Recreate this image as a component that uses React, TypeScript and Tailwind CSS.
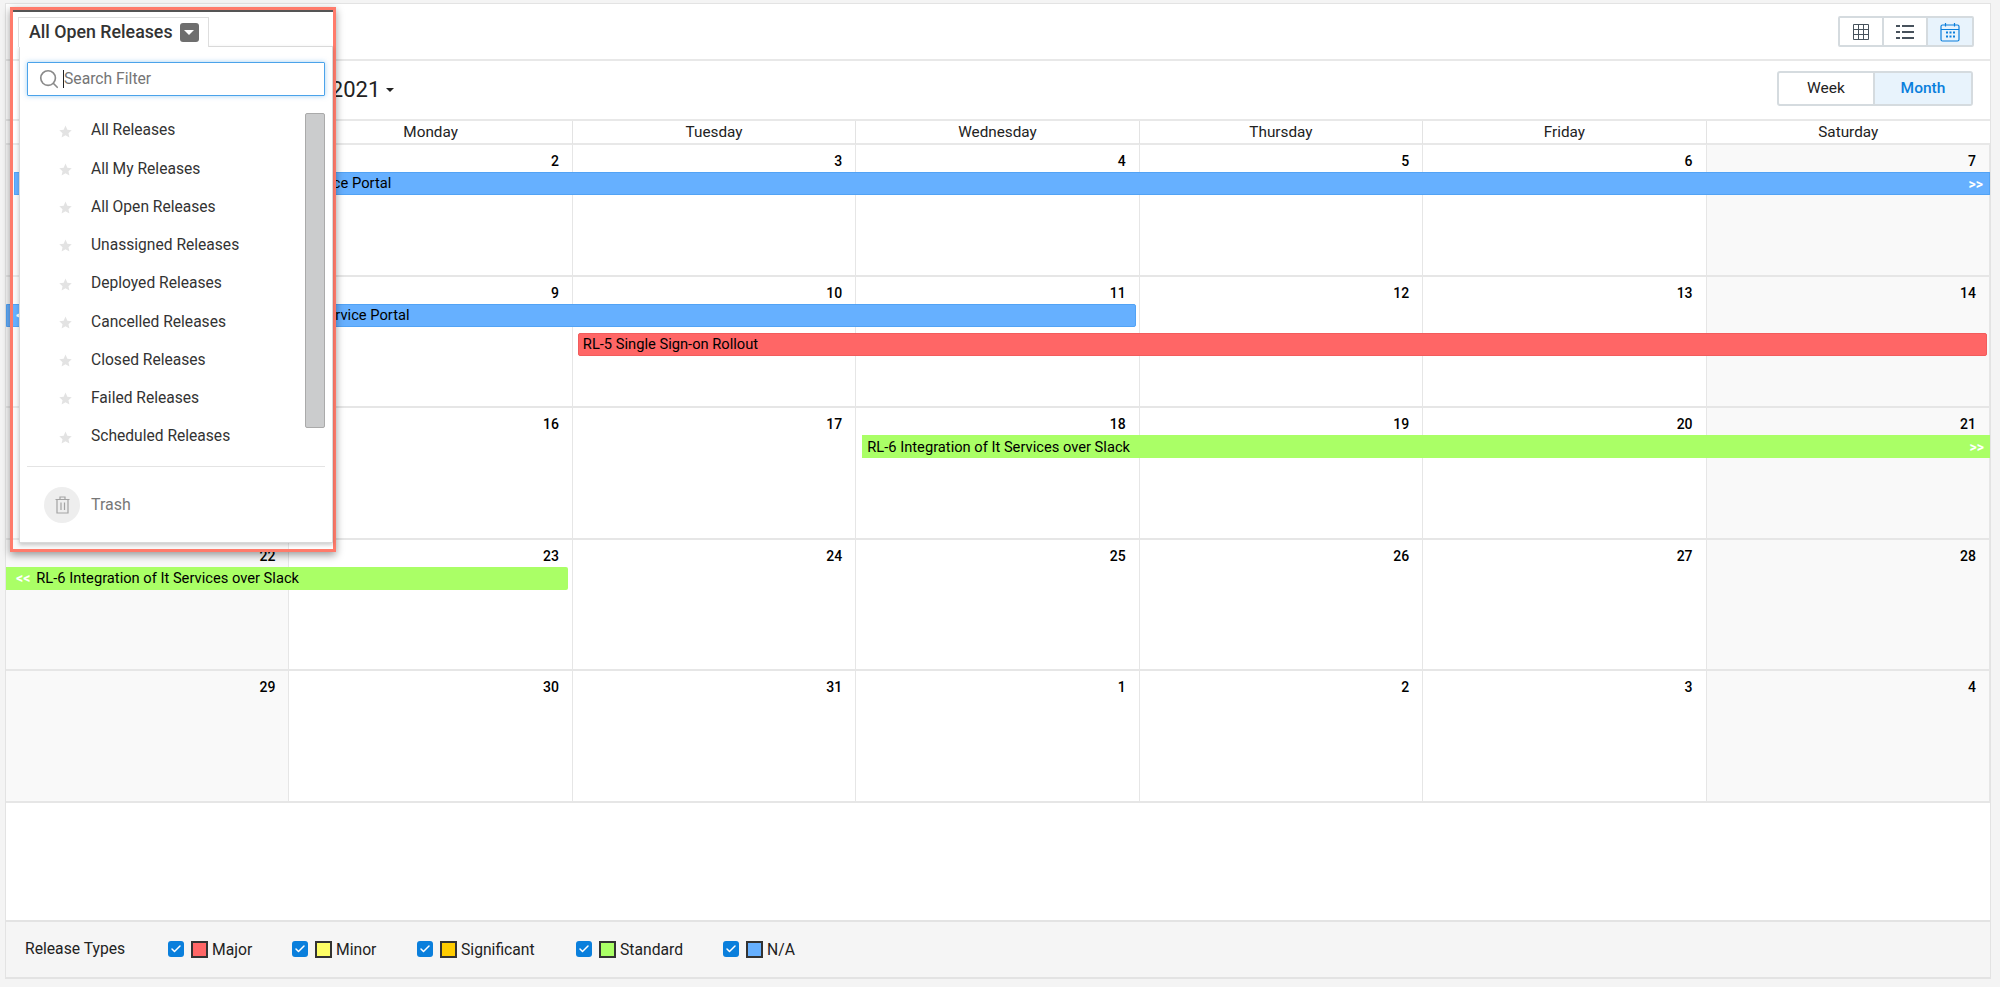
import React from 'react';
import { Check, Search } from 'lucide-react';

const days = ['Sunday', 'Monday', 'Tuesday', 'Wednesday', 'Thursday', 'Friday', 'Saturday'];

const weeks = [
  [1, 2, 3, 4, 5, 6, 7],
  [8, 9, 10, 11, 12, 13, 14],
  [15, 16, 17, 18, 19, 20, 21],
  [22, 23, 24, 25, 26, 27, 28],
  [29, 30, 31, 1, 2, 3, 4],
];

const filters = [
  'All Releases',
  'All My Releases',
  'All Open Releases',
  'Unassigned Releases',
  'Deployed Releases',
  'Cancelled Releases',
  'Closed Releases',
  'Failed Releases',
  'Scheduled Releases',
];

const legend = [
  { name: 'Major', swatch: 'bg-[#ff6666]', width: 'w-[124px]' },
  { name: 'Minor', swatch: 'bg-[#ffff66]', width: 'w-[125px]' },
  { name: 'Significant', swatch: 'bg-[#ffcc00]', width: 'w-[159px]' },
  { name: 'Standard', swatch: 'bg-[#aaff66]', width: 'w-[147px]' },
  { name: 'N/A', swatch: 'bg-[#66b0ff]', width: 'w-[80px]' },
];

const ViewIcon: React.FC<{ kind: 'grid' | 'list' | 'calendar' }> = ({ kind }) => {
  if (kind === 'grid') {
    return (
      <svg width="16" height="16" viewBox="0 0 16 16" fill="none" stroke="#47525c" strokeWidth="1">
        <path d="M.5.5h15v15H.5zM5.5.5v15M10.5.5v15M.5 5.5h15M.5 10.5h15" />
      </svg>
    );
  }
  if (kind === 'list') {
    return (
      <svg width="18" height="16" viewBox="0 0 18 16" fill="#47525c">
        <path d="M0 1h4v2H0zM6 1h12v2H6zM0 7h4v2H0zM6 7h12v2H6zM0 13h4v2H0zM6 13h12v2H6z" />
      </svg>
    );
  }
  return (
    <svg width="20" height="20" viewBox="0 0 20 20" fill="none" stroke="#0a7fdc" strokeWidth="1.2">
      <rect x="1" y="3" width="18" height="16" rx="1.5" />
      <path d="M1 7.5h18M5.5 1v3.5M14.500 1v3.5" />
      <path
        fill="#0a7fdc"
        stroke="none"
        d="M6 9.500h2v2H6zM9.500 9.500h2v2h-2zM13 9.500h2v2h-2zM6 13.500h2v2H6zM9.500 13.500h2v2h-2zM13 13.500h2v2h-2z"
      />
    </svg>
  );
};

const Star = () => (
  <svg width="13" height="13" viewBox="0 0 24 24" fill="#e3e3e3">
    <path d="M12 1l3.400 7.600 8.100.9-6 5.500 1.700 8-7.200-4.100L4.800 23l1.700-8-6-5.500 8.100-.9z" />
  </svg>
);

const Arrows: React.FC<{ text: string }> = ({ text }) => (
  <span className="text-[14px] font-bold text-white leading-none">{text}</span>
);

export default function App() {
  return (
    <div className="relative w-[2000px] h-[987px] bg-[#f4f4f4] overflow-hidden font-['Roboto',sans-serif] text-[14.700px] text-black">
      <div className="flex flex-col h-[976px] ml-[5px] mr-[9px] mt-[3px] bg-white border border-[#e3e3e3] border-b-0">
        {/* top toolbar */}
        <div className="h-[57px] shrink-0 flex items-center justify-end pr-[16px] border-b-2 border-[#e8e8e8]">
          <div className="flex h-[31px] border-2 border-[#d5dbdf] rounded-[2px]">
            <div className="w-[44px] flex items-center justify-center border-r-2 border-[#d5dbdf]">
              <ViewIcon kind="grid" />
            </div>
            <div className="w-[44px] flex items-center justify-center border-r-2 border-[#d5dbdf]">
              <ViewIcon kind="list" />
            </div>
            <div className="w-[44px] flex items-center justify-center bg-[#e8f3fc]">
              <ViewIcon kind="calendar" />
            </div>
          </div>
        </div>

        {/* month title and range switch */}
        <div className="h-[58px] shrink-0 flex items-center justify-between pl-[250px] pr-[17px]">
          <div className="flex items-center gap-[6px] text-[22px] text-[#222] -mt-[1px]">
            <span>August 2021</span>
            <span className="w-0 h-0 border-x-[4px] border-x-transparent border-t-[4px] border-t-[#222]" />
          </div>
          <div className="flex h-[35px] -mt-[3px] border-2 border-[#d5dbdf] rounded-[3px] text-[15.500px]">
            <div className="w-[96px] flex items-center justify-center border-r-2 border-[#d5dbdf] text-[#222]">Week</div>
            <div className="w-[96px] flex items-center justify-center bg-[#e8f3fc] font-medium text-[#0a7fdc]">Month</div>
          </div>
        </div>

        {/* weekday headings */}
        <div className="h-[26px] shrink-0 grid grid-cols-7 border-y-2 border-[#e8e8e8]">
          {days.map((day) => (
            <div key={day} className="flex items-center justify-center text-[15.300px] text-[#222] border-r border-[#e3e3e3] last:border-r-0">
              {day}
            </div>
          ))}
        </div>

        {/* weeks */}
        {weeks.map((week, i) => (
          <div key={i} className="relative h-[131.600px] shrink-0">
            <div className="grid grid-cols-7 h-full">
              {week.map((date, j) => (
                <div
                  key={j}
                  className={`border-r border-b-2 border-[#e6e6e6] pr-[13px] pt-[6px] text-right text-[14px] font-medium leading-[20px] ${
                    j === 0 || j === 6 ? 'bg-[#f9f9f9]' : 'bg-white'
                  }`}
                >
                  {date}
                </div>
              ))}
            </div>
            <div className="absolute inset-0 pt-[27px] grid grid-cols-7 auto-rows-[23px] gap-y-[6px]">
              {i === 0 && (
                <div className="col-span-7 ml-[8px] flex items-center justify-between pl-[8px] pr-[6px] bg-[#66b0ff] border border-[#52a3f5]">
                  <span>RL-4 Implementation of the Employee Self-Service Portal</span>
                  <Arrows text=">>" />
                </div>
              )}
              {i === 1 && (
                <>
                  <div className="col-span-4 mr-[4px] flex items-center gap-[11px] pl-[9px] bg-[#66b0ff] border border-[#52a3f5] rounded-r-[2px]">
                    <Arrows text="<<" />
                    <span>RL-4 Implementation of the Employee Self-Service Portal</span>
                  </div>
                  <div className="col-start-3 col-span-5 ml-[5px] mr-[3px] flex items-center pl-[4px] bg-[#ff6666] border border-[#f25c5c] rounded-[2px]">
                    RL-5 Single Sign-on Rollout
                  </div>
                </>
              )}
              {i === 2 && (
                <div className="col-start-4 col-span-4 ml-[6px] flex items-center justify-between pl-[5px] pr-[6px] bg-[#aaff66]">
                  <span>RL-6 Integration of It Services over Slack</span>
                  <Arrows text=">>" />
                </div>
              )}
              {i === 3 && (
                <div className="col-span-2 mr-[5px] flex items-center gap-[6px] pl-[10px] bg-[#aaff66] rounded-r-[2px]">
                  <Arrows text="<<" />
                  <span>RL-6 Integration of It Services over Slack</span>
                </div>
              )}
            </div>
          </div>
        ))}

        <div className="flex-1" />

        {/* legend */}
        <div className="h-[59px] shrink-0 flex items-center pl-[19px] bg-[#f5f5f5] border-t-2 border-b-2 border-[#e3e3e3]">
          <span className="w-[143px] text-[15.700px] text-[#222] -mt-[2px]">Release Types</span>
          {legend.map((item) => (
            <div key={item.name} className={`flex items-center ${item.width}`}>
              <span className="w-[16px] h-[16px] rounded-[3px] bg-[#0a7fdc] flex items-center justify-center">
                <Check size={12} strokeWidth={3} className="text-white" />
              </span>
              <span className={`w-[17px] h-[17px] ml-[7px] mr-[4px] border-2 border-[#333] ${item.swatch}`} />
              <span className="text-[15.700px] text-[#222]">{item.name}</span>
            </div>
          ))}
        </div>
      </div>

      {/* filter dropdown with its highlight frame */}
      <div className="absolute left-[10px] top-[7px] w-[326px] h-[545px] border-[3.500px] border-[#ff7b6b] shadow-[0_3px_8px_rgba(0,0,0,0.4)]">
        <div className="h-[1.500px] bg-[#555]" />
      </div>
      <div className="absolute left-[18px] top-[17px] w-[191px] h-[30px] bg-white border border-[#dedede] border-b-0 flex items-center pl-[10px] gap-[7px] z-10">
        <span className="text-[17.800px] font-medium text-[#333]">All Open Releases</span>
        <span className="w-[19px] h-[19px] rounded-[3px] bg-[#6e6e6e] flex items-center justify-center">
          <span className="w-0 h-0 border-x-[5px] border-x-transparent border-t-[5px] border-t-white" />
        </span>
      </div>
      <div className="absolute left-[19px] top-[46px] w-[314px] h-[497px] bg-white border border-[#d9d9d9] shadow-[0_2px_4px_rgba(0,0,0,0.2)] pl-[7px] pr-[7px] pt-[15px]">
        <div className="h-[34px] flex items-center border border-[#4ba3ea] rounded-[1px] shadow-[0_0_5px_rgba(75,163,234,0.5)] pl-[10px]">
          <Search size={22} strokeWidth={1.8} className="text-[#8a8a8a] shrink-0" />
          <span className="w-px h-[18px] bg-[#222] ml-[3px]" />
          <span className="text-[15.700px] text-[#757575]">Search Filter</span>
        </div>
        <div className="flex mt-[17px] h-[315px]">
          <div className="flex-1 -mt-[1px]">
            {filters.map((name) => (
              <div key={name} className="h-[38.250px] flex items-center pl-[32px] gap-[19px] text-[15.600px] text-[#333]">
                <Star />
                <span>{name}</span>
              </div>
            ))}
          </div>
          <div className="w-[20px] h-full bg-[#cbcccd] border border-[#aaa] rounded-[2px]" />
        </div>
        <div className="mt-[38px] border-t border-[#e4e4e4] flex items-center h-[76px] pl-[17px]">
          <span className="w-[36px] h-[36px] rounded-full bg-[#eeeeee] flex items-center justify-center">
            <svg width="15" height="18" viewBox="0 0 15 18" fill="none" stroke="#a3a3a3" strokeWidth="1.200">
              <path d="M.5 3.500h14M5 3.500V1h5v2.500M2 3.500V17h11V3.500M6 6.500v7.500M9.500 6.500v7.500" />
            </svg>
          </span>
          <span className="ml-[11px] text-[16px] text-[#777]">Trash</span>
        </div>
      </div>
    </div>
  );
}
